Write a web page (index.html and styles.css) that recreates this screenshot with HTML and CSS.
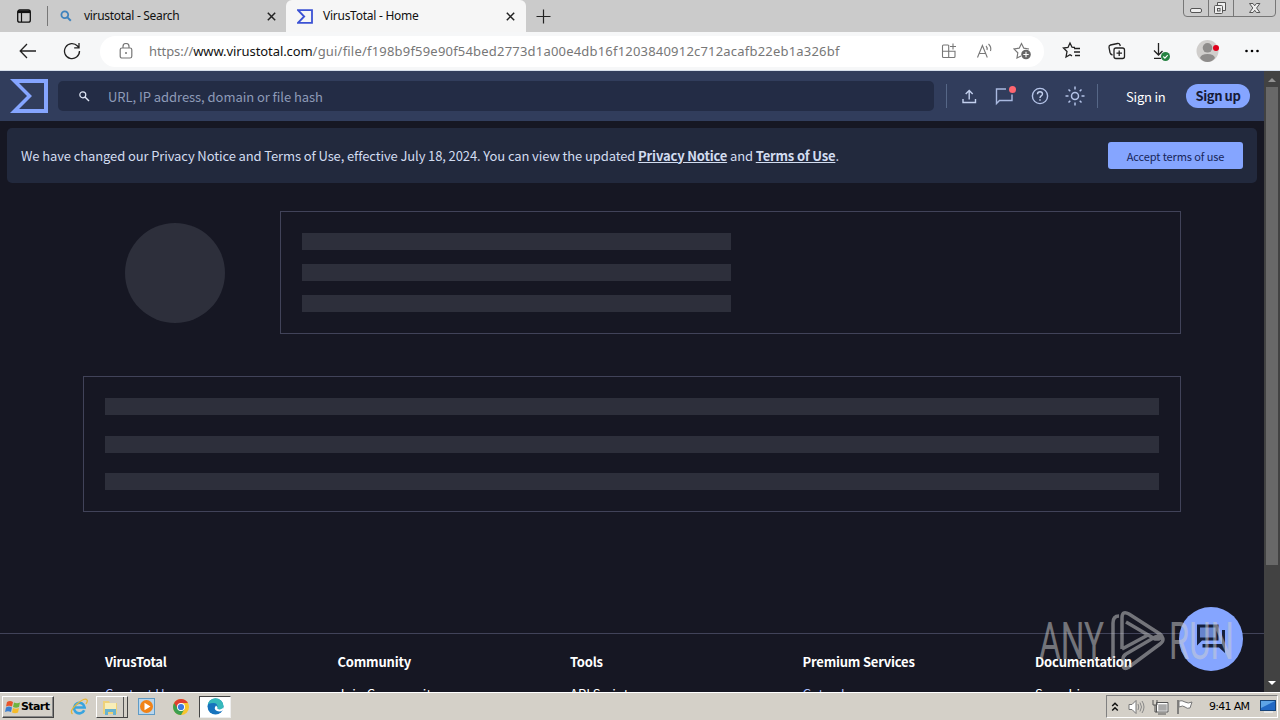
FILE: index.html
```html
<!DOCTYPE html>
<html lang="en">
<head>
  <meta charset="UTF-8" />
  <meta name="viewport" content="width=device-width, initial-scale=1.0"/>
  <title>VirusTotal - Home</title>
  <link rel="stylesheet" href="styles.css">
</head>
<body>
  <!-- Tab strip -->
  <div class="tabstrip">
    <svg class="tab-menu" width="16" height="16" viewBox="0 0 16 16"><rect x="1.7" y="2" width="12.6" height="12.2" rx="2" fill="none" stroke="#111" stroke-width="1.3"/><path d="M2 3.8h12" stroke="#111" stroke-width="2.6" fill="none"/><path d="M5.500 5v9" stroke="#111" stroke-width="1.200"/></svg>
    <div class="tab tab-search">
      <svg width="12" height="12" viewBox="0 0 12 12"><circle cx="4.8" cy="4.8" r="3.4" fill="none" stroke="#3f83bd" stroke-width="1.8"/><path d="M7.4 7.4l3.4 3.4" stroke="#3f83bd" stroke-width="2"/></svg>
      <span class="tab-title title-search">virustotal - Search</span>
      <svg class="close" width="9" height="9" viewBox="0 0 9 9"><path d="M.8.8l7.4 7.4M8.2.8L.8 8.2" stroke="#222" stroke-width="1.5"/></svg>
    </div>
    <div class="tab tab-active">
      <svg width="16" height="15" viewBox="0 0 16 15"><path d="M1 1.2h14v12.6H1l6.2-6.3z" fill="none" stroke="#3b52d4" stroke-width="1.8"/></svg>
      <span class="tab-title title-home">VirusTotal - Home</span>
      <svg class="close" width="9" height="9" viewBox="0 0 9 9"><path d="M.8.8l7.4 7.4M8.2.8L.8 8.2" stroke="#222" stroke-width="1.5"/></svg>
    </div>
    <svg class="new-tab" width="15" height="15" viewBox="0 0 15 15"><path d="M7.5.5v14M.5 7.5h14" stroke="#222" stroke-width="1.2"/></svg>
    <svg class="win-buttons" width="94" height="17" viewBox="0 0 94 17">
      <path d="M.5 0v13q0 3.5 3.5 3.5h85q3.5 0 3.5-3.5V0M25.500 0v16.500M50.500 0v16.500" fill="none" stroke="#777"/>
      <rect x="7.500" y="8.500" width="11" height="4" rx="1.500" fill="#eee" stroke="#555"/>
      <path d="M34.500 5.500V2.500h8v8h-3" fill="#eee" stroke="#555"/>
      <rect x="31.500" y="5.500" width="8" height="8" rx="1" fill="#eee" stroke="#555"/><rect x="34.500" y="8.500" width="2.500" height="2.500" fill="none" stroke="#555"/>
      <path d="M66.500 3.500h3.500l1.700 2.300 1.700-2.300h3.500L73.600 8l3.300 4.500h-3.500l-1.700-2.300-1.700 2.300h-3.500L69.800 8z" fill="#eee" stroke="#555"/>
    </svg>
  </div>

  <!-- Browser toolbar -->
  <div class="toolbar">
    <svg class="nav-back" width="18" height="16" viewBox="0 0 18 16"><path d="M8 1L1.200 8 8 15M1.500 8H17" fill="none" stroke="#222" stroke-width="1.300"/></svg>
    <svg class="nav-reload" width="18" height="18" viewBox="0 0 18 18"><path d="M16.500 9A7.500 7.500 0 1 1 14.500 4L16 5.600M16 1v4.800h-4.800" fill="none" stroke="#222" stroke-width="1.300"/></svg>
    <div class="address">
      <svg class="lock" width="14" height="16" viewBox="0 0 14 16"><rect x="1.200" y="5" width="11.600" height="10" rx="1.800" fill="none" stroke="#777" stroke-width="1.200"/><path d="M4 5V3.500a3 3 0 0 1 6 0V5" fill="none" stroke="#777" stroke-width="1.200"/><circle cx="7" cy="10" r="1" fill="#777"/></svg>
      <span class="url">https://<b>www.virustotal.com</b><span class="path">/gui/file/f198b9f59e90f54bed2773d1a00e4db16f1203840912c712acafb22eb1a326bf</span></span>
      <div class="address-icons">
        <svg width="16" height="16" viewBox="0 0 16 16"><path d="M7.500 2H2.500q-1 0-1 1v10.500q0 1 1 1h10.500q1 0 1-1V8.200H1.500M7.700 2v12.500M12 .5v6M9 3.500h6" fill="none" stroke="#777" stroke-width="1.100"/></svg>
        <svg width="18" height="16" viewBox="0 0 18 16"><path d="M1.500 14.500L6.400 2.500l4.900 12M3.200 10.500h6.500M10 3q1.600 1.600 1 4M12.500 1q3.200 3 2 7" fill="none" stroke="#777" stroke-width="1.100"/></svg>
        <svg width="19" height="18" viewBox="0 0 19 18"><path d="M8 14l-4 2 .8-5.200L1 7l5.200-.8L8.500 1.500l2.300 4.700 5.200.8" fill="none" stroke="#777" stroke-width="1.200"/><circle cx="13" cy="12.500" r="4.800" fill="#666"/><path d="M13 9.800v5.400M10.300 12.500h5.400" stroke="#fff" stroke-width="1.100"/></svg>
      </div>
    </div>
    <div class="toolbar-icons">
      <svg width="20" height="20" viewBox="0 0 20 20"><path d="M13 6.500l-3-.3L8 2 6 6.500 1.500 7l3.500 3.500L4 16l4-2.300 2 1.200M12 7.500h6M12 11h6M13 14.500h5" fill="none" stroke="#222" stroke-width="1.300"/></svg>
      <svg width="20" height="20" viewBox="0 0 20 20"><rect x="7" y="7" width="10.500" height="10.500" rx="2" fill="none" stroke="#222" stroke-width="1.300"/><path d="M12.200 9.500v5.500M9.500 12.200h5.500M5.500 14Q3.500 13.500 3 11.500L2 6.500q-.3-2 1.500-2.500l7-1.500q2-.3 2.500 1.500l.3 1" fill="none" stroke="#222" stroke-width="1.300"/></svg>
      <svg width="20" height="20" viewBox="0 0 20 20"><path d="M7.500 2v12M3 9.500l4.500 4.500 4-4M3 17.300h7" fill="none" stroke="#222" stroke-width="1.300"/><circle cx="14.500" cy="15.500" r="4.500" fill="#278343"/><path d="M12.300 15.500l1.600 1.600 2.800-3" fill="none" stroke="#fff" stroke-width="1.100"/></svg>
      <svg width="24" height="24" viewBox="0 0 24 24"><circle cx="11.500" cy="12" r="11" fill="#d0cecc"/><circle cx="11.500" cy="8.800" r="4.800" fill="#8e8c8b"/><path d="M4 19q1-4 7.500-4t7.500 4q-3 4-7.500 4T4 19" fill="#8e8c8b"/><circle cx="20" cy="9" r="3" fill="#e0001b"/></svg>
      <svg width="16" height="4" viewBox="0 0 16 4"><circle cx="2.500" cy="2" r="1.300"/><circle cx="8" cy="2" r="1.300"/><circle cx="13.500" cy="2" r="1.300"/></svg>
    </div>
  </div>

  <!-- Page viewport -->
  <div class="viewport">
    <div class="page">
      <header>
        <svg class="logo" width="39" height="34" viewBox="0 0 39 34"><path d="M0 0h38v34H0l17-17zM9 4l13 13L9 30h25V4z" fill="#85a5ff" fill-rule="evenodd"/></svg>
        <div class="search">
          <svg width="12" height="12" viewBox="0 0 12 12"><circle cx="4.800" cy="4.800" r="3" fill="none" stroke="#dfe6f5" stroke-width="1.200"/><path d="M7 7l4 4" stroke="#dfe6f5" stroke-width="1.500"/></svg>
          <span>URL, IP address, domain or file hash</span>
        </div>
        <div class="header-icons">
          <svg width="18" height="18" viewBox="0 0 18 18"><path d="M3 12v3.500h12.500V12M9.200 12.500V4M5.700 7L9.200 3.500 12.700 7" fill="none" stroke="#c3d0ee" stroke-width="1.400"/></svg>
          <svg class="messages" width="20" height="22" viewBox="0 0 20 22"><path d="M12 4H2.500v14.500l3-3h12.500V9.500" fill="none" stroke="#a9b9e0" stroke-width="1.400"/><circle cx="18.500" cy="4.500" r="3.500" fill="#ff6670"/></svg>
          <svg width="18" height="18" viewBox="0 0 18 18"><circle cx="9" cy="9" r="7.600" fill="none" stroke="#b4c3e8" stroke-width="1.400"/><path d="M6.500 7.200q0-2.500 2.500-2.500t2.500 2.200q0 1-1.300 2-1.200.9-1.200 2M9 12.300v1.500" fill="none" stroke="#c3d0ee" stroke-width="1.400"/></svg>
          <svg width="20" height="20" viewBox="0 0 20 20"><circle cx="10" cy="10" r="3.500" fill="none" stroke="#b4c3e8" stroke-width="1.500"/><path d="M10 .5v3M10 16.500v3M.5 10h3M16.500 10h3M3.500 3.500l1.800 1.800M14.700 14.700l1.800 1.800M16.500 3.500l-1.800 1.800M5.300 14.700l-1.800 1.800" stroke="#b4c3e8" stroke-width="1.500"/></svg>
        </div>
        <a class="sign-in">Sign in</a>
        <a class="sign-up">Sign up</a>
      </header>

      <div class="notice">
        <p>We have changed our Privacy Notice and Terms of Use, effective July 18, 2024. You can view the updated <a>Privacy Notice</a> and <a>Terms of Use</a>.</p>
        <button>Accept terms of use</button>
      </div>

      <!-- Loading placeholders -->
      <main>
        <div class="summary">
          <div class="circle"></div>
          <div class="card card-summary">
            <div class="bar"></div>
            <div class="bar"></div>
            <div class="bar"></div>
          </div>
        </div>
        <div class="card card-details">
          <div class="bar"></div>
          <div class="bar"></div>
          <div class="bar"></div>
        </div>
      </main>

      <footer>
        <div><h4>VirusTotal</h4><a class="blue">Contact Us</a></div>
        <div><h4>Community</h4><a>Join Community</a></div>
        <div><h4>Tools</h4><a>API Scripts</a></div>
        <div><h4>Premium Services</h4><a class="blue">Get a demo</a></div>
        <div><h4>Documentation</h4><a>Searching</a></div>
      </footer>

      <div class="chat">
        <svg width="32" height="32" viewBox="0 0 32 32"><path d="M2 1.500h21.500v16H7L2 22.500zM27 7h3v23l-6-5.500H7.500V21H27z" fill="#16203c"/><path d="M5 4.500h15.500v10H5z" fill="#6684cd"/></svg>
      </div>
    </div>
    <div class="scrollbar">
      <svg width="16" height="16" viewBox="0 0 16 16"><path d="M4 11l4-4 4 4z" fill="#929292"/></svg>
      <div class="thumb"></div>
      <svg class="down" width="16" height="16" viewBox="0 0 16 16"><path d="M4 5l4 4 4-4z" fill="#fff"/></svg>
    </div>
  </div>

  <!-- Taskbar -->
  <div class="taskbar">
    <div class="start">
      <svg width="16" height="16" viewBox="0 0 16 16"><path d="M2 3q3-2 6 0L7 7.500q-3-1.500-6 0z" fill="#e8552b"/><path d="M9 3.500q3 1.500 6 0L14 8q-3 1.500-6 0z" fill="#6eb43f"/><path d="M1 8.500q3-2 6 0L6 13q-3-1.500-6 0z" fill="#3b7fd0"/><path d="M8 9q3 1.500 6 0l-1 4.500q-3 1.500-6 0z" fill="#f5bb2a"/></svg>
      <span>Start</span>
    </div>
    <svg class="ie" width="18" height="18" viewBox="0 0 18 18"><path d="M14.200 12.200A5.300 5.300 0 1 1 14.600 9.500H5" fill="none" stroke="#38a4df" stroke-width="2.600"/><path d="M2.500 16Q-1 13 7 6t10-4q1 1-1 4" fill="none" stroke="#e6b636" stroke-width="1.300"/></svg>
    <div class="explorer">
      <svg width="18" height="18" viewBox="0 0 18 18"><path d="M2 3h6l1 2h7v11H2z" fill="#eed179"/><path d="M4 5h11v6H4z" fill="#f8eeb8"/><path d="M4 17v-6h11v6h-3v-3H7v3z" fill="#69b3cf"/></svg>
    </div>
    <svg class="player" width="17" height="17" viewBox="0 0 17 17"><rect x=".5" y=".5" width="16" height="16" fill="#b9d6ed" stroke="#5f9bc6"/><circle cx="8.500" cy="8.500" r="6.500" fill="#f18318"/><path d="M6.500 4.800l6 3.700-6 3.700z" fill="#fff"/></svg>
    <svg class="chrome" width="16" height="16" viewBox="0 0 16 16"><circle cx="8" cy="8" r="8" fill="#f7c52d"/><path d="M8 8L1.100 4A8 8 0 0 0 8 16l3.500-6z" fill="#3c9f50"/><path d="M8 4h6.900a8 8 0 0 0-13.800 0L5 10z" fill="#df3e32"/><circle cx="8" cy="8" r="4" fill="#fff"/><circle cx="8" cy="8" r="3.100" fill="#3c79e1"/></svg>
    <div class="edge">
      <svg width="17" height="17" viewBox="0 0 17 17"><circle cx="8.500" cy="8.500" r="8" fill="#1673bd"/><path d="M.5 8.500A8 8 0 0 1 16.500 8q0 3.500-4 3.500-3 0-2-2.500Q10.500 5 6.500 5-.2 5 .5 8.500" fill="#36b9bb"/><path d="M9 7.500q-3 3.500 1 5.500 3 1.200 6-.8l1 1.800-1-4q-2 1.800-4.500 1.300-2-.5-1-2z" fill="#fff"/></svg>
    </div>
    <div class="tray">
      <svg width="8" height="12" viewBox="0 0 8 12"><path d="M1.200 5L4 2.300 6.800 5M1.200 9.500L4 6.800l2.800 2.700" fill="none" stroke="#111" stroke-width="1.500"/></svg>
      <svg class="sound" width="17" height="16" viewBox="0 0 17 16"><path d="M1 5.500h3l4-4v13l-4-4H1z" fill="#fff" stroke="#777"/><path d="M10 5q1.500 3 0 6M12 3.500q3 4.500 0 9M14 2q4 6 0 12" fill="none" stroke="#888"/></svg>
      <svg class="network" width="17" height="16" viewBox="0 0 17 16"><rect x="5.500" y="4.500" width="10" height="8" fill="#aaa" stroke="#fff" stroke-width="1.500"/><path d="M4.500 3.500h11.500v9.500H4.500zM6 15h8M1 1v5h4V1M3 6v7h2" fill="none" stroke="#555"/></svg>
      <svg class="flag" width="17" height="16" viewBox="0 0 17 16"><path d="M2 1v14" stroke="#666" stroke-width="1.500"/><path d="M3 2q3-1 6 1t7 0l-2 6q-3 1-5-1T3 8z" fill="#fff" stroke="#777"/></svg>
      <span>9:41 AM</span>
      <svg class="desktop" width="16" height="13" viewBox="0 0 16 13"><rect x=".5" y=".5" width="15" height="10" fill="#2269c4" stroke="#164479"/><path d="M1 1h14L1 8z" fill="#5ea4e6"/><path d="M4 12h9" stroke="#eee" stroke-width="1.500"/></svg>
    </div>
  </div>

  <svg class="watermark" width="200" height="70" viewBox="0 0 200 70">
    <text x="3" y="54" textLength="65" lengthAdjust="spacingAndGlyphs">ANY</text>
    <text x="133" y="54" textLength="65" lengthAdjust="spacingAndGlyphs">RUN</text>
    <path d="M77 54V18q0-7 6-7M86 44V13q0-8 7-4l31 20q4 3-1 5h-4L90 17M86 44l26-14M90 49l29-17q7-3 8 2 0 3-3 5L93 62q-6 4-6-3v-5q0-3 3-5"/>
  </svg>
</body>
</html>
```
FILE: styles.css
```css
* {
  box-sizing: border-box;
}

body {
  margin: 0;
  width: 1280px;
  height: 720px;
  overflow: hidden;
  position: relative;
  display: flex;
  flex-direction: column;
  font-family: "Noto Sans CJK SC", "Noto Sans", sans-serif;
  background: #161723;
}

svg {
  display: block;
  flex: none;
}

/* Tab strip */
.tabstrip {
  height: 32px;
  flex: none;
  display: flex;
  align-items: center;
  background: #cbcbcb;
  font-family: "Noto Sans", sans-serif;
  font-size: 12px;
  color: #111;
}

.tab-menu {
  margin: 0 0 0 16px;
}

.tab {
  height: 32px;
  display: flex;
  align-items: center;
  white-space: nowrap;
}

.tab-search {
  width: 239px;
  margin-left: 15px;
  padding: 0 10px 0 13px;
  background: linear-gradient(#777, #777) 0 50% / 1px 20px no-repeat;
}

.tab-active {
  width: 240px;
  padding: 0 11px 0 11px;
  background: #f6f6f6;
  border-radius: 6px 6px 0 0;
}

.tab-title {
  line-height: 16px;
  padding-bottom: 1px;
}

.title-search {
  margin-left: 12px;
  letter-spacing: -0.3px;
}

.title-home {
  margin-left: 10px;
  letter-spacing: -0.26px;
}

.close {
  margin-left: auto;
}

.new-tab {
  margin-left: 10px;
}

.win-buttons {
  margin-left: auto;
  margin-right: 3px;
  align-self: flex-start;
}

/* Toolbar */
.toolbar {
  height: 39px;
  flex: none;
  display: flex;
  align-items: center;
  background: #f6f7f8;
  border-bottom: 1px solid #d5deeb;
}

.nav-back {
  margin-left: 19px;
}

.nav-reload {
  margin-left: 26px;
}

.address {
  width: 944px;
  height: 31px;
  margin-left: 19px;
  padding: 0 12px 0 19px;
  display: flex;
  align-items: center;
  background: #fff;
  border-radius: 16px;
}

.url {
  margin-left: 16px;
  font-family: "Noto Sans", sans-serif;
  font-size: 13px;
  letter-spacing: -0.08px;
  color: #777;
  white-space: nowrap;
}

.url b {
  font-weight: normal;
  color: #111;
}

.path {
  letter-spacing: 0.2px;
}

.address-icons {
  margin-left: auto;
  display: flex;
  align-items: center;
  gap: 19px;
}

.toolbar-icons {
  margin-left: 18px;
  display: flex;
  align-items: center;
  gap: 24.5px;
}

/* Page */
.viewport {
  height: 621px;
  flex: none;
  display: flex;
}

.page {
  width: 1264px;
  position: relative;
  overflow: hidden;
}

header {
  height: 50px;
  display: flex;
  align-items: center;
  padding-left: 10px;
  background: #313d5c;
}

.search {
  width: 876px;
  height: 30px;
  margin-left: 9px;
  padding-left: 20px;
  display: flex;
  align-items: center;
  gap: 18px;
  background: #232c45;
  border-radius: 5px;
  color: #8e9bb8;
  font-size: 13px;
  letter-spacing: -0.05px;
}

.header-icons {
  width: 152px;
  height: 24px;
  margin-left: 12px;
  padding: 0 12px 0 13px;
  display: flex;
  align-items: center;
  justify-content: space-between;
  border-left: 1px solid #566787;
  border-right: 1px solid #566787;
}

.messages {
  overflow: visible;
}

.sign-in {
  width: 60px;
  margin-left: 28px;
  font-size: 13px;
  letter-spacing: -0.2px;
  color: #fff;
}

.sign-up {
  width: 64px;
  height: 24px;
  line-height: 24px;
  text-align: center;
  border-radius: 12px;
  background: #85a5ff;
  color: #161b38;
  font-size: 13px;
  font-weight: bold;
  letter-spacing: -0.4px;
}

.notice {
  height: 55px;
  margin: 7px 7px 0;
  padding: 0 14px;
  display: flex;
  align-items: center;
  justify-content: space-between;
  background: #22293d;
  border-radius: 5px;
  color: #d2dcf0;
  font-size: 13px;
  letter-spacing: -0.11px;
  white-space: nowrap;
}

.notice p {
  margin: 0;
  padding-bottom: 1px;
}

.notice a {
  font-weight: bold;
  letter-spacing: -0.17px;
  text-decoration: underline;
}

.notice button {
  width: 135px;
  height: 27px;
  padding: 0;
  border: none;
  border-radius: 3px;
  background: #85a5ff;
  color: #17265a;
  font-family: inherit;
  font-size: 11px;
  letter-spacing: -0.1px;
}

main {
  width: 1098px;
  margin: 28px 0 0 83px;
}

.summary {
  display: flex;
  align-items: center;
}

.circle {
  width: 100px;
  height: 100px;
  margin: 0 55px 0 42px;
  border-radius: 50%;
  background: #2d2f3b;
}

.card {
  border: 1px solid #414359;
  display: flex;
  flex-direction: column;
}

.card-summary {
  width: 901px;
  height: 123px;
  padding: 21px;
  gap: 14px;
}

.card-details {
  height: 136px;
  margin-top: 42px;
  padding: 21px;
  gap: 20.5px;
}

.bar {
  height: 17px;
  background: #2d2f3b;
}

.card-summary .bar {
  width: 429px;
}

footer {
  margin-top: 121px;
  padding: 16px 0 0 105px;
  display: grid;
  grid-template-columns: repeat(5, 232.5px);
  border-top: 1px solid #414359;
  color: #fff;
  font-size: 13px;
  line-height: 24px;
}

footer h4 {
  margin: 0 0 8px;
  font-size: 13px;
  letter-spacing: -0.2px;
}

footer a {
  display: block;
}

footer .blue {
  color: #a9bcfa;
}

.chat {
  position: absolute;
  right: 21px;
  bottom: 21px;
  width: 64px;
  height: 64px;
  display: flex;
  align-items: center;
  justify-content: center;
  border-radius: 50%;
  background: #85a5ff;
}

.scrollbar {
  width: 16px;
  display: flex;
  flex-direction: column;
  align-items: center;
  background: #424242;
}

.thumb {
  width: 12px;
  height: 478px;
  background: #686868;
}

.down {
  margin-top: auto;
}

/* Taskbar */
.taskbar {
  height: 28px;
  flex: none;
  padding: 0 2px;
  display: flex;
  align-items: center;
  background: #d4d0c8;
  border-top: 1px solid #fff;
  font-family: "DejaVu Sans", sans-serif;
}

.start {
  width: 52px;
  height: 22px;
  padding-left: 2px;
  display: flex;
  align-items: center;
  border: 1px solid;
  border-color: #fff #444 #444 #fff;
  box-shadow: inset -1px -1px #888;
  font-family: "DejaVu Sans", sans-serif;
  font-size: 11px;
  font-weight: bold;
  letter-spacing: -0.6px;
}

.ie {
  margin-left: 16px;
}

.explorer {
  width: 32px;
  height: 22px;
  margin-left: 8px;
  padding-left: 4px;
  display: flex;
  align-items: center;
  border: 1px solid;
  border-color: #fff #444 #444 #fff;
  box-shadow: inset -3px 0 #d4d0c8, inset -4px 0 #555;
}

.player {
  margin-left: 10px;
}

.chrome {
  margin-left: 18px;
}

.edge {
  width: 32px;
  height: 22px;
  margin-left: 10px;
  display: flex;
  align-items: center;
  justify-content: center;
  background: #fff;
  border: 1px solid;
  border-color: #444 #eee #eee #444;
}

.tray {
  width: 172px;
  height: 23px;
  margin-left: auto;
  padding-left: 4px;
  display: flex;
  align-items: center;
  border: 1px solid;
  border-color: #808080 #fff #fff #808080;
  font-size: 11px;
  white-space: nowrap;
}

.sound {
  margin-left: 9px;
}

.network,
.flag {
  margin-left: 7px;
}

.tray span {
  margin-left: 16px;
  letter-spacing: -0.7px;
}

.desktop {
  margin-left: auto;
  margin-right: 1px;
}

/* Recording overlay */
.watermark {
  position: absolute;
  left: 1036px;
  top: 605px;
  opacity: 0.5;
}

.watermark text {
  font-family: Roboto, sans-serif;
  font-size: 51px;
  font-weight: 400;
  fill: #d0d0d0;
}

.watermark path {
  fill: none;
  stroke: #d0d0d0;
  stroke-width: 3.5;
}
```
